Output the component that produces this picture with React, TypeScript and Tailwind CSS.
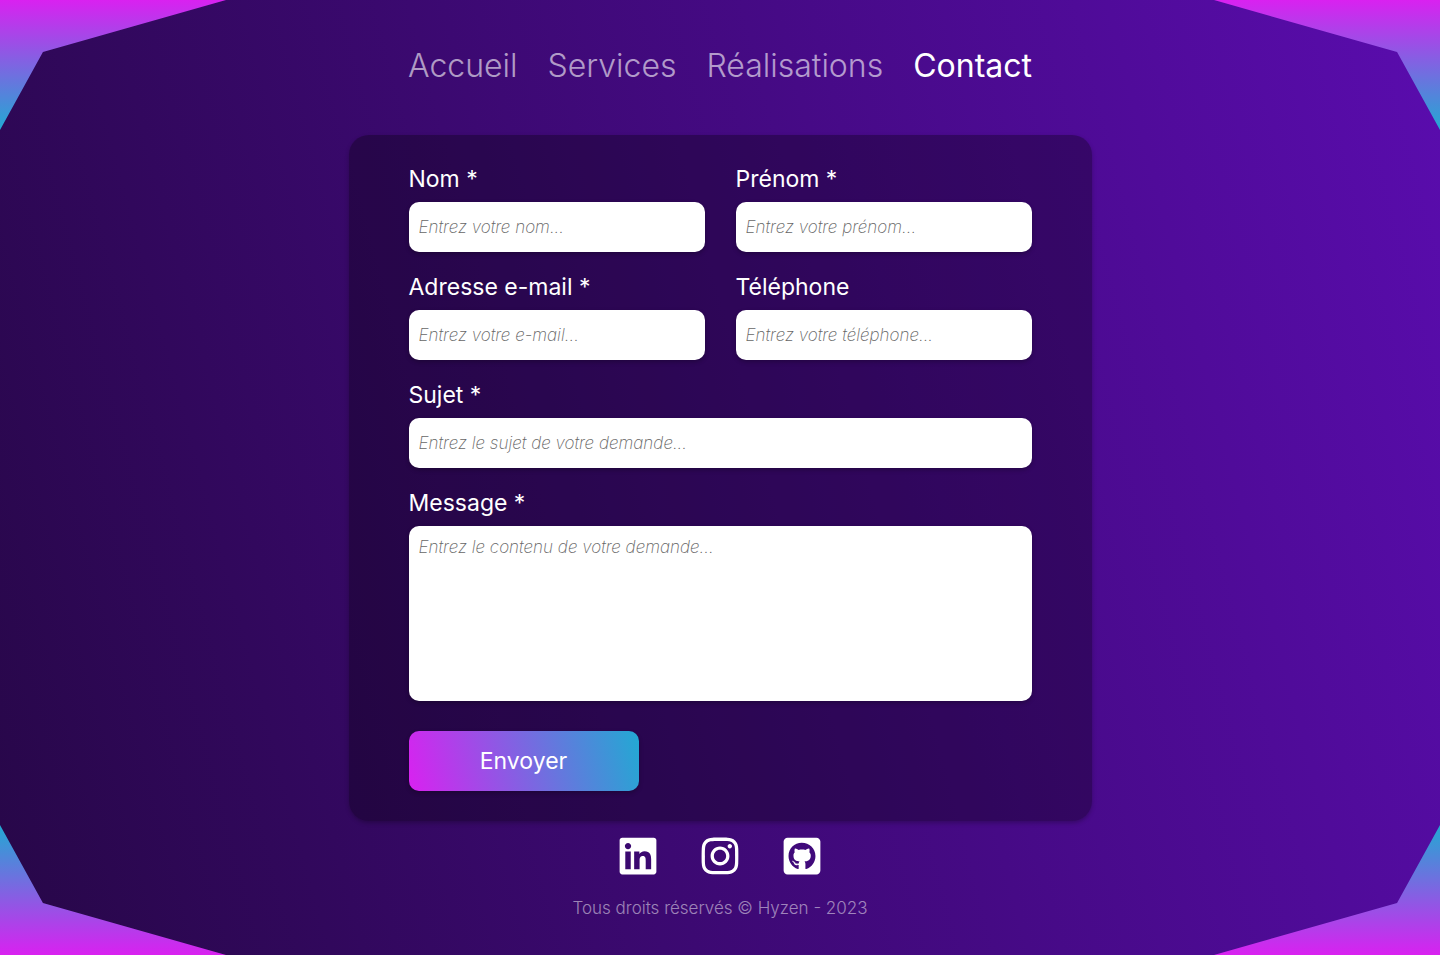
import { FaGithubSquare, FaInstagram, FaLinkedin } from "react-icons/fa";

const links = [
  { label: "Accueil", href: "#accueil" },
  { label: "Services", href: "#services" },
  { label: "Réalisations", href: "#realisations" },
  { label: "Contact", href: "#contact", active: true },
];

const socials = [
  { label: "LinkedIn", href: "#linkedin", Icon: FaLinkedin },
  { label: "Instagram", href: "#instagram", Icon: FaInstagram },
  { label: "GitHub", href: "#github", Icon: FaGithubSquare },
];

const control =
  "block w-full rounded-[10px] bg-white px-2.5 text-[17px] font-extralight text-black shadow-[0_2px_4px_rgba(0,0,0,0.25)] outline-none placeholder:italic placeholder:text-[#666666] placeholder:opacity-100";

function Label({ id, children }: { id: string; children: string }) {
  return (
    <label htmlFor={id} className="mb-[7px] block text-[23px] leading-8 text-white">
      {children}
    </label>
  );
}

type FieldProps = {
  id: string;
  label: string;
  placeholder: string;
  type?: string;
  required?: boolean;
  wide?: boolean;
};

function Field({ id, label, placeholder, type = "text", required, wide }: FieldProps) {
  return (
    <div className={wide ? "sm:col-span-2" : ""}>
      <Label id={id}>{label}</Label>
      <input id={id} name={id} type={type} required={required} placeholder={placeholder} className={`${control} h-[50px]`} />
    </div>
  );
}

function Corner({ className }: { className: string }) {
  return (
    <div
      aria-hidden="true"
      className={`pointer-events-none absolute h-[130px] w-[226px] bg-[linear-gradient(180deg,#d921f0,#22a9d3)] [clip-path:polygon(0_0,100%_0,19%_40%,0_100%)] ${className}`}
    />
  );
}

export default function App() {
  return (
    <div className="relative flex min-h-screen flex-col items-center overflow-hidden bg-[linear-gradient(75deg,#270748,#5a0cae)] px-4 font-['Inter','Liberation_Sans',sans-serif]">
      <Corner className="top-0 left-0" />
      <Corner className="top-0 right-0 -scale-x-100" />
      <Corner className="bottom-0 left-0 -scale-y-100" />
      <Corner className="right-0 bottom-0 -scale-100" />

      <header className="w-full max-w-[624px] pt-[42px]">
        <nav className="flex flex-wrap justify-between text-[32px] leading-[48px]">
          {links.map(({ label, href, active }) => (
            <a
              key={label}
              href={href}
              aria-current={active ? "page" : undefined}
              className={active ? "text-white" : "font-light text-white/60"}
            >
              {label}
            </a>
          ))}
        </nav>
      </header>

      <main className="mt-[45px] w-full max-w-[743px]">
        <form className="rounded-[20px] bg-black/30 px-[60px] pt-7 pb-[30px] shadow-[0_2px_4px_rgba(0,0,0,0.25)]">
          <div className="grid gap-x-[31px] gap-y-[19px] sm:grid-cols-2">
            <Field id="nom" label="Nom *" placeholder="Entrez votre nom..." required />
            <Field id="prenom" label="Prénom *" placeholder="Entrez votre prénom..." required />
            <Field id="email" label="Adresse e-mail *" placeholder="Entrez votre e-mail..." type="email" required />
            <Field id="telephone" label="Téléphone" placeholder="Entrez votre téléphone..." type="tel" />
            <Field id="sujet" label="Sujet *" placeholder="Entrez le sujet de votre demande..." required wide />
            <div className="sm:col-span-2">
              <Label id="message">Message *</Label>
              <textarea
                id="message"
                name="message"
                required
                placeholder="Entrez le contenu de votre demande..."
                className={`${control} h-[175px] resize-none py-2 leading-[26px]`}
              />
            </div>
          </div>
          <button
            type="submit"
            className="mt-[30px] h-[60px] w-[230px] rounded-[10px] bg-[linear-gradient(75deg,#d921f0,#22a9d3)] text-[23px] text-white shadow-[0_2px_4px_rgba(0,0,0,0.25)]"
          >
            Envoyer
          </button>
        </form>
      </main>

      <footer className="mt-[14px] flex flex-col items-center pb-8">
        <div className="flex gap-10 text-[42px] text-white">
          {socials.map(({ label, href, Icon }) => (
            <a key={label} href={href} aria-label={label}>
              <Icon />
            </a>
          ))}
        </div>
        <p className="mt-[18px] text-[17px] leading-[26px] font-light text-white/50">Tous droits réservés © Hyzen - 2023</p>
      </footer>
    </div>
  );
}
